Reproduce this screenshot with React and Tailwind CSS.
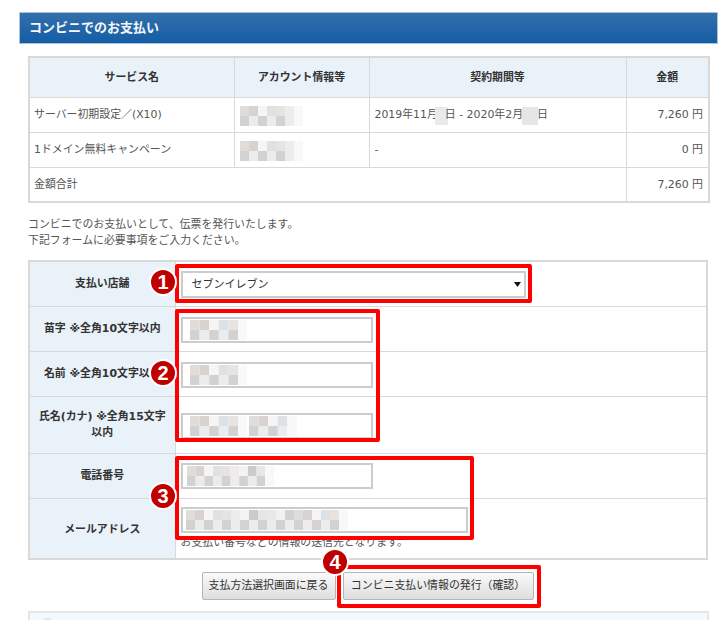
import React from "react";

const GRAYS = ["#e0dcd9","#ececec","#f1f1f1","#dde2e6","#e6e6e6","#d8d3d0","#f3f3f3","#d2d2d2","#e8e3df","#e4e9ed","#f5f5f5","#cbcbcb"];

function Mosaic({ cols, rows = 2, cell = 9, fade = true, className = "" }) {
  const rects = [];
  for (let r = 0; r < rows; r++) {
    for (let c = 0; c < cols; c++) {
      const last = fade && c === cols - 1;
      rects.push(
        <rect
          key={r + "-" + c}
          x={c * cell}
          y={r * 10}
          width={cell}
          height={10}
          fill={last ? "#f8f8f8" : GRAYS[(c * 5 + r * 7 + c * r) % GRAYS.length]}
        />
      );
    }
  }
  return (
    <svg width={cols * cell} height={rows * 10} className={"block shrink-0 " + className}>
      {rects}
    </svg>
  );
}

function TextInput({ cols, cols2, width = "w-[192px]", pad = "pl-[7px]", cell = 9.6 }) {
  return (
    <div className={width + " h-[26px] border-2 border-[#cccccc] bg-white flex items-center gap-[2px] overflow-hidden " + pad}>
      <Mosaic cols={cols} cell={cell} />
      {cols2 ? <Mosaic cols={cols2} cell={cell} /> : null}
    </div>
  );
}

function Badge({ n, className }) {
  return (
    <div className={"absolute w-[28px] h-[28px] rounded-full bg-[#c00000] border-2 border-white text-white font-bold text-[20px] leading-none flex items-center justify-center font-['Liberation_Sans',sans-serif] " + className}>
      {n}
    </div>
  );
}

function Frame({ className }) {
  return <div className={"absolute border-4 border-[#ff0000] rounded-[2px] pointer-events-none " + className} />;
}

const th = "border border-[#d9d9d9] bg-[#e9f1f9] font-bold text-center text-[#333333] pt-[2px]";
const td = "border border-[#d9d9d9] pl-[4px] pr-[5px] pt-[2px] text-[#555555]";
const label = "border border-[#d9d9d9] bg-[#e9f1f9] font-bold text-center text-[#333333] px-[5px] leading-[16px]";
const field = "border border-[#d9d9d9] px-[5px] align-middle";
const fieldLow = field + " pt-[2px]";

export default function App() {
  return (
    <div className="relative w-[720px] h-[620px] overflow-hidden bg-white text-[10.9px] font-[family-name:'DejaVu_Sans','Noto_Sans_CJK_JP',sans-serif]">
      <div className="pt-[12px] pl-[19px] w-[718px]">
        <div className="h-[32px] flex items-center pl-[9px] text-[#f4f8fb] text-[13px] font-bold bg-gradient-to-b from-[#326fab] to-[#135da5] border border-[#a9c3dc]">
          コンビニでのお支払い
        </div>

        <div className="pl-[9px] pr-[9px]">
          <table className="mt-[12px] w-[680px] border-collapse table-fixed border-2 border-[#d9d9d9]">
            <colgroup>
              <col className="w-[205px]" />
              <col className="w-[135px]" />
              <col className="w-[257px]" />
              <col className="w-[83px]" />
            </colgroup>
            <tbody>
              <tr className="h-[40px]">
                <th className={th}>サービス名</th>
                <th className={th}>アカウント情報等</th>
                <th className={th}>契約期間等</th>
                <th className={th}>金額</th>
              </tr>
              <tr className="h-[35px]">
                <td className={td}>サーバー初期設定／(X10)</td>
                <td className={td + " pl-[5px]"}><Mosaic cols={7} /></td>
                <td className={td + " pl-[5px]"}>
                  <span className="inline-flex items-center">2019年11月<span className="inline-block w-[13px] h-[18px] -ml-[3px] -mr-[3px] bg-[#eaeaea]" />日 - 2020年2月<span className="inline-block w-[16px] h-[18px] -ml-[1px] -mr-[1px] bg-[#e6e6e6]" />日</span>
                </td>
                <td className={td + " text-right"}>7,260 円</td>
              </tr>
              <tr className="h-[35px]">
                <td className={td}>1ドメイン無料キャンペーン</td>
                <td className={td + " pl-[5px]"}><Mosaic cols={7} /></td>
                <td className={td + " pl-[5px]"}>-</td>
                <td className={td + " text-right"}>0 円</td>
              </tr>
              <tr className="h-[35px]">
                <td className={td} colSpan={3}>金額合計</td>
                <td className={td + " text-right"}>7,260 円</td>
              </tr>
            </tbody>
          </table>

          <p className="mt-[14px] leading-[16px] text-[#555555]">
            コンビニでのお支払いとして、伝票を発行いたします。<br />
            下記フォームに必要事項をご入力ください。
          </p>

          <table className="mt-[11px] w-[680px] border-collapse table-fixed border-2 border-[#d9d9d9]">
            <colgroup>
              <col className="w-[146px]" />
              <col />
            </colgroup>
            <tbody>
              <tr className="h-[45px]">
                <td className={label}>支払い店舗</td>
                <td className={fieldLow}>
                  <div className="relative w-[345px] h-[27px]">
                    <select className="appearance-none w-full h-full border-2 border-[#cccccc] bg-white pl-[9px] text-[11px] text-[#333333]">
                      <option>セブンイレブン</option>
                    </select>
                    <svg width="7" height="5" viewBox="0 0 7 5" className="absolute right-[5px] top-[11px]">
                      <path d="M0 0H7L3.5 5Z" fill="#111111" />
                    </svg>
                  </div>
                </td>
              </tr>
              <tr className="h-[45px]">
                <td className={label}>苗字 ※全角10文字以内</td>
                <td className={fieldLow}><TextInput cols={6} /></td>
              </tr>
              <tr className="h-[45px]">
                <td className={label}>名前 ※全角10文字以内</td>
                <td className={fieldLow}><TextInput cols={6} /></td>
              </tr>
              <tr className="h-[57px]">
                <td className={label}>氏名(カナ) ※全角15文字以内</td>
                <td className={fieldLow}><TextInput cols={6} cols2={5} /></td>
              </tr>
              <tr className="h-[45px]">
                <td className={label}>電話番号</td>
                <td className={field}><TextInput cols={10} cell={8.7} pad="pl-[4px]" /></td>
              </tr>
              <tr className="h-[61px]">
                <td className={label + " pt-[3px]"}>メールアドレス</td>
                <td className={field}>
                  <TextInput cols={18} cell={9} width="w-[287px]" pad="pl-[3px]" />
                  <div className="leading-[14px] mt-[3px] text-[#555555]">お支払い番号などの情報の送信先となります。</div>
                </td>
              </tr>
            </tbody>
          </table>

          <div className="mt-[12px] flex justify-center gap-[7px] pr-[2px]">
            <button className="h-[28px] w-[134px] border border-[#b5b5b5] rounded-[2px] bg-gradient-to-b from-[#fafafa] to-[#dedede] text-[#333333]">支払方法選択画面に戻る</button>
            <button className="h-[28px] w-[191px] border border-[#b5b5b5] rounded-[2px] bg-gradient-to-b from-[#fafafa] to-[#dedede] text-[#333333]">コンビニ支払い情報の発行（確認）</button>
          </div>

          <div className="mt-[11px] h-[40px] w-[681px] border-2 border-[#e3e6e9] bg-[#f4f9fd] pl-[10px] pt-[5px]">
            <div className="w-[15px] h-[15px] rounded-full bg-[#dbe6f2]" />
          </div>
        </div>
      </div>

      <Frame className="left-[175px] top-[264px] w-[357px] h-[39px]" />
      <Frame className="left-[175px] top-[309px] w-[205px] h-[133px]" />
      <Frame className="left-[175px] top-[456px] w-[299px] h-[84px]" />
      <Frame className="left-[337px] top-[565px] w-[204px] h-[43px]" />
      <Badge n="1" className="left-[149px] top-[268px]" />
      <Badge n="2" className="left-[149px] top-[359px]" />
      <Badge n="3" className="left-[149px] top-[482px]" />
      <Badge n="4" className="left-[321px] top-[548px]" />
    </div>
  );
}
